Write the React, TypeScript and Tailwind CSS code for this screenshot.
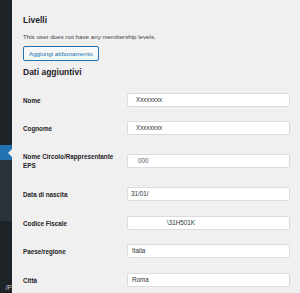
const rows = [
  { label: "Nome", value: "Xxxxxxxx", pad: "pl-[8px]", mt: "mt-[14px]" },
  { label: "Cognome", value: "Xxxxxxxx", pad: "pl-[8px]", mt: "mt-[14px]" },
  { label: "Nome Circolo/Rappresentante EPS", value: "000", pad: "pl-[10px] text-[#50575e]", mt: "mt-[17px]" },
  { label: "Data di nascita", value: "31/01/", pad: "pl-[3px]", mt: "mt-[17px]" },
  { label: "Codice Fiscale", value: "\\31H501K", pad: "pl-[39px]", mt: "mt-[15px]" },
  { label: "Paese/regione", value: "Italia", pad: "pl-[4px]", mt: "mt-[14px]" },
  { label: "Città", value: "Roma", pad: "pl-[4px]", mt: "mt-[15px]" },
];

export default function App() {
  return (
    <div className="flex h-[293px] w-[300px] overflow-hidden bg-[#f0f0f1] font-['Liberation_Sans',Arial,sans-serif] text-[#1d2327]">

      {/* Sidebar */}

      <div className="flex w-[12px] shrink-0 flex-col bg-[#1d2327]">
        <div className="h-[145px]" />
        <div className="relative h-[15px] bg-[#2271b1]">
          <div className="absolute right-0 top-[4px] h-0 w-0 border-y-[4px] border-r-[4px] border-y-transparent border-r-[#f0f0f1]" />
        </div>
        <div className="h-[61px] bg-[#2c3338]" />
        <div className="flex flex-1 items-end justify-end pb-[1px]">
          <span className="text-[7px] leading-[8px] text-[#c3c4c7]">/P</span>
        </div>
      </div>

      {/* Content */}

      <div className="flex-1 pl-[11px] pr-[10px]">

        <h2 className="mt-[14px] text-[8.5px] font-bold leading-[12px]">Livelli</h2>

        <p className="mt-[6px] whitespace-nowrap text-[6.2px] leading-[9px] text-[#3c434a]">
          This user does not have any membership levels.
        </p>

        <button className="mt-[5px] flex h-[15px] items-center rounded-[2px] border border-[#2271b1] bg-[#f6f7f7] px-[5px] text-[6.2px] text-[#2271b1]">
          Aggiungi abbonamento
        </button>

        <h2 className="mt-[5px] text-[8.5px] font-bold leading-[12px]">Dati aggiuntivi</h2>

        <div className="pt-[1px]">
          {rows.map((r) => (
            <div key={r.label} className={`flex items-center ${r.mt}`}>
              <div className="w-[104px] shrink-0 pr-[6px] text-[6.3px] font-bold leading-[9px]">
                {r.label}
              </div>
              <div
                className={`flex h-[14px] flex-1 items-center rounded-[2px] border border-[#dcdcde] bg-white text-[6.3px] text-[#2c3338] ${r.pad}`}
              >
                {r.value}
              </div>
            </div>
          ))}
        </div>

      </div>
    </div>
  );
}
